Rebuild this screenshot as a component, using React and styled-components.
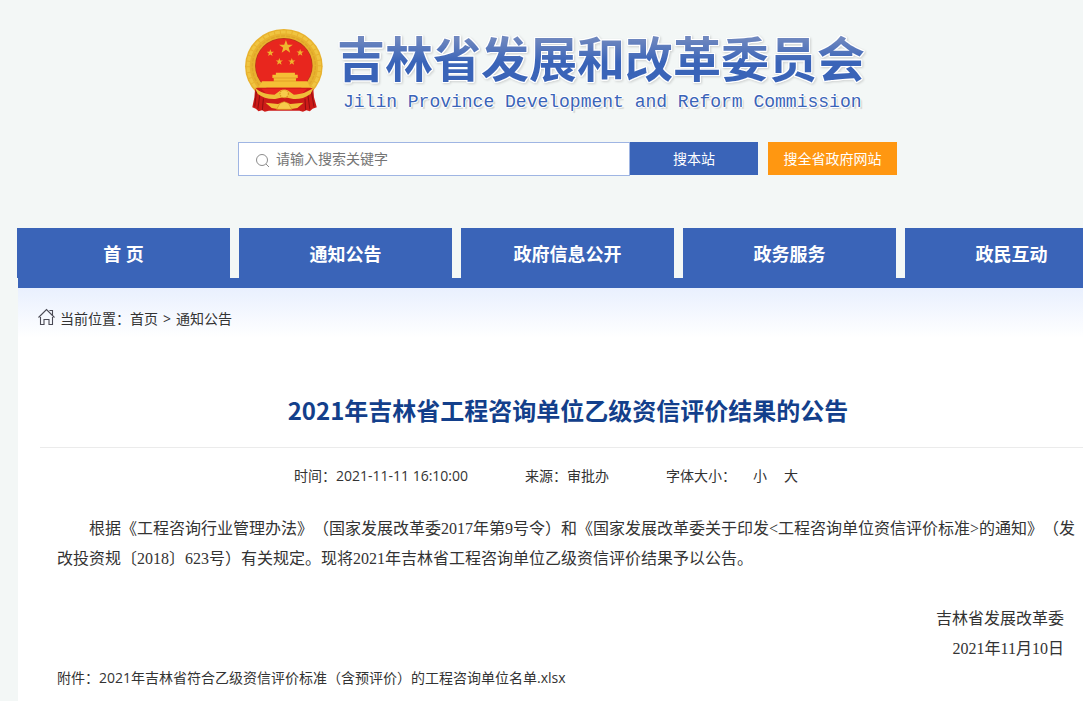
import React from 'react';
import styled, { createGlobalStyle } from 'styled-components';

const GlobalStyle = createGlobalStyle`
    * {
        box-sizing: border-box;
    }

    body {
        margin: 0;
        overflow-x: hidden;
        background-color: #f3f7f6;
        color: #333;
        font-family: "Open Sans", "Noto Sans CJK SC", sans-serif;
        font-size: 14px;
        text-spacing-trim: space-all;
    }

    a {
        color: inherit;
        text-decoration: none;
    }
`;

const Page = styled.div`
    display: flex;
    flex-direction: column;
    min-width: 1118px;
    min-height: 100vh;
    padding-left: 17px;
`;

const Header = styled.header`
    display: flex;
    flex-direction: column;
    align-self: center;
    gap: 30px;
    padding: 28px 0 52px;
`;

const Brand = styled.div`
    display: flex;
    gap: 14px;
    height: 84px;
    padding-left: 6px;
`;

const BrandText = styled.div`
    display: flex;
    flex-direction: column;
    gap: 8px;
`;

const SiteName = styled.h1`
    margin: 0;
    font-family: "Noto Sans CJK SC", sans-serif;
    font-size: 48px;
    line-height: 56px;
    font-weight: 700;
    color: transparent;
    background: linear-gradient(#7088bf 10px, #3a64b8 34px);
    background-clip: text;
    filter: drop-shadow(1px 0 0 #fff) drop-shadow(-1px 0 0 #fff)
        drop-shadow(0 1px 0 #fff) drop-shadow(0 -1px 0 #fff)
        drop-shadow(1px 1px 1px rgba(0, 0, 0, 0.15));
`;

const SiteSubtitle = styled.div`
    padding-left: 6px;
    font-family: "Liberation Mono", monospace;
    font-size: 18px;
    line-height: 20px;
    color: #3a64b8;
    text-shadow: 1px 0 #fff, -1px 0 #fff, 0 1px #fff, 0 -1px #fff, 2px 2px 1px rgba(0, 0, 0, 0.15);
`;

const SearchForm = styled.form`
    display: flex;
    align-items: flex-start;
`;

const SearchField = styled.label`
    display: flex;
    align-items: center;
    gap: 6px;
    width: 392px;
    height: 34px;
    padding-left: 16px;
    background-color: #fff;
    border: 1px solid #9fb5e3;
`;

const SearchInput = styled.input`
    flex: 1;
    min-width: 0;
    height: 30px;
    padding: 0 0 2px;
    border: none;
    outline: none;
    background: transparent;
    font: inherit;

    &::placeholder {
        color: #757575;
    }
`;

const SearchButton = styled.button`
    width: ${({ $wide }) => ($wide ? '129px' : '128px')};
    height: 33px;
    margin-left: ${({ $wide }) => ($wide ? '10px' : '0')};
    padding: 0 0 2px;
    border: none;
    background-color: ${({ $wide }) => ($wide ? '#ff9711' : '#3a64b8')};
    color: #fff;
    font: inherit;
    cursor: pointer;
`;

const Nav = styled.nav`
    display: grid;
    grid-template-columns: repeat(5, 1fr);
    gap: 9px;
`;

const NavLink = styled.a`
    height: 50px;
    background-color: #3a64b8;
    color: #fff;
    font-size: 18px;
    line-height: 52px;
    font-weight: 700;
    text-align: center;
`;

const Main = styled.main`
    flex: 1;
    margin-left: 1px;
    padding: 17px 22px 0;
    border-top: 10px solid #3a64b8;
    background: linear-gradient(#e9f0fe, #fff 50px);
`;

const Breadcrumb = styled.div`
    display: flex;
    align-items: center;
    gap: 5px;
    height: 26px;
    margin-left: -2px;
`;

const ArticleTitle = styled.h2`
    margin: 60px 0 0;
    padding-bottom: 18px;
    border-bottom: 1px solid #ebebeb;
    color: #133f8b;
    font-family: "Noto Sans CJK SC", sans-serif;
    font-size: 24px;
    line-height: 38px;
    font-weight: 700;
    text-align: center;
`;

const Meta = styled.div`
    display: flex;
    justify-content: center;
    gap: 57px;
    padding: 18px 44px 0 0;
    line-height: 20px;
`;

const FontSizes = styled.div`
    display: flex;
    gap: 17px;
`;

const SizeButton = styled.button`
    padding: 0;
    border: none;
    background: none;
    color: inherit;
    font: inherit;
    cursor: pointer;
`;

const Content = styled.div`
    padding: 28px 16px 0 17px;
    font-family: "Liberation Serif", "Noto Sans CJK SC", serif;
    font-size: 16px;
    line-height: 30px;
`;

const Paragraph = styled.p`
    margin: 0;
    text-indent: 2em;
`;

const Signature = styled.div`
    padding: 30px 16px 0 0;
    text-align: right;
`;

const Attachment = styled.div`
    padding: 0 17px;
    line-height: 28px;
`;

const STAR = '0,-10 2.4,-3.2 9.5,-3.1 3.8,1.2 5.9,8.1 0,4 -5.9,8.1 -3.8,1.2 -9.5,-3.1 -2.4,-3.2';

const STARS = [
    [145, 81, 2.1],
    [100, 99, 1.1],
    [186, 98, 1.1],
    [126, 125, 1.1],
    [162, 125, 1.1],
];

function Emblem() {
    return (
        <svg width="79" height="84" viewBox="24 24 228 252" preserveAspectRatio="none" role="img" aria-label="国徽">
            <circle cx="139" cy="139" r="112" fill="#e8b22e" />
            <circle cx="139" cy="139" r="103" fill="none" stroke="#f0c440" strokeWidth="9" strokeDasharray="14 3" />
            <circle cx="139" cy="139" r="91" fill="none" stroke="#dfa62a" strokeWidth="4" strokeDasharray="11 4" />
            <circle cx="139" cy="137" r="83" fill="#b9361a" />
            <circle cx="139" cy="137" r="81" fill="#e8261e" />
            {STARS.map(([x, y, scale]) => (
                <polygon key={x} points={STAR} fill="#efb42e" transform={`translate(${x} ${y}) scale(${scale})`} />
            ))}
            <path d="M116 158H171V164H179V174H174V184H206L216 203H66L76 184H110V174H106V164H116Z" fill="#f5bf35" />
            <path d="M108 174H177M110 183H174" stroke="#dc9420" strokeWidth="2" />
            <path d="M62 203H216L224 206L226 232L234 262L222 266L214 274L204 271L194 275L184 272H96L84 275L76 271L66 274L58 266L48 262L54 232L56 206Z" fill="#cd1b18" />
            <path d="M74 206H206L188 224L160 230L140 215L120 230L92 224Z" fill="#e8261e" />
            <path d="M60 212L55 260M70 222L64 266M80 236L77 270M218 212L226 260M208 222L214 268M200 236L202 270" stroke="#930f12" strokeWidth="3" />
            <path d="M54 202C70 218 92 224 112 224L130 211H150L168 224C188 224 210 216 226 202L216 222C200 234 184 238 166 237L140 231L114 237C94 238 76 232 64 222Z" fill="#efbe39" />
            <circle cx="140" cy="221" r="12" fill="#f7cb4b" stroke="#d78e1c" strokeWidth="3" strokeDasharray="4 3" />
            <path d="M86 248L122 252L140 246L158 252L196 248L178 264L156 268H124L104 264Z" fill="#f2be38" />
            <path d="M118 268L128 250L140 245L152 250L162 268Z" fill="#f7cb4b" stroke="#d78e1c" strokeWidth="2" />
        </svg>
    );
}

function SearchIcon() {
    return (
        <svg width="15" height="15" viewBox="0 0 15 15" fill="none" stroke="#8c8c8c" aria-hidden="true">
            <circle cx="7" cy="8" r="5.5" />
            <path d="M11 12l3 3" />
        </svg>
    );
}

function HomeIcon() {
    return (
        <svg width="17" height="20" viewBox="0 0 17 20" fill="none" stroke="#4a4a55" strokeWidth="1.1" aria-hidden="true">
            <path d="M.5 9.500L8.500 1.500l8 8M11.500 2.500h3v4.500M2.500 9v7.500h3.500v-5h5v5h3.500V9" />
        </svg>
    );
}

const navItems = ['首 页', '通知公告', '政府信息公开', '政务服务', '政民互动'];

export default function App() {
    return (
        <>
            <GlobalStyle />
            <Page>
                <Header>
                    <Brand>
                        <Emblem />
                        <BrandText>
                            <SiteName>吉林省发展和改革委员会</SiteName>
                            <SiteSubtitle>Jilin Province Development and Reform Commission</SiteSubtitle>
                        </BrandText>
                    </Brand>
                    <SearchForm onSubmit={(e) => e.preventDefault()}>
                        <SearchField>
                            <SearchIcon />
                            <SearchInput type="text" aria-label="请输入搜索关键字" placeholder="请输入搜索关键字" />
                        </SearchField>
                        <SearchButton type="submit">搜本站</SearchButton>
                        <SearchButton type="button" $wide>搜全省政府网站</SearchButton>
                    </SearchForm>
                </Header>
                <Nav>
                    {navItems.map((item) => (
                        <NavLink key={item} href="#">{item}</NavLink>
                    ))}
                </Nav>
                <Main>
                    <Breadcrumb>
                        <HomeIcon />
                        <span>当前位置：<a href="#">首页</a></span>
                        <span>&gt;</span>
                        <a href="#">通知公告</a>
                    </Breadcrumb>
                    <ArticleTitle>2021年吉林省工程咨询单位乙级资信评价结果的公告</ArticleTitle>
                    <Meta>
                        <span>时间：2021-11-11 16:10:00</span>
                        <span>来源：审批办</span>
                        <FontSizes>
                            <span>字体大小：</span>
                            <SizeButton type="button">小</SizeButton>
                            <SizeButton type="button">大</SizeButton>
                        </FontSizes>
                    </Meta>
                    <Content>
                        <Paragraph>
                            根据《工程咨询行业管理办法》（国家发展改革委2017年第9号令）和《国家发展改革委关于印发&lt;工程咨询单位资信评价标准&gt;的通知》（发改投资规〔2018〕623号）有关规定。现将2021年吉林省工程咨询单位乙级资信评价结果予以公告。
                        </Paragraph>
                        <Signature>
                            <div>吉林省发展改革委</div>
                            <div>2021年11月10日</div>
                        </Signature>
                    </Content>
                    <Attachment>
                        附件：<a href="#">2021年吉林省符合乙级资信评价标准（含预评价）的工程咨询单位名单.xlsx</a>
                    </Attachment>
                </Main>
            </Page>
        </>
    );
}
